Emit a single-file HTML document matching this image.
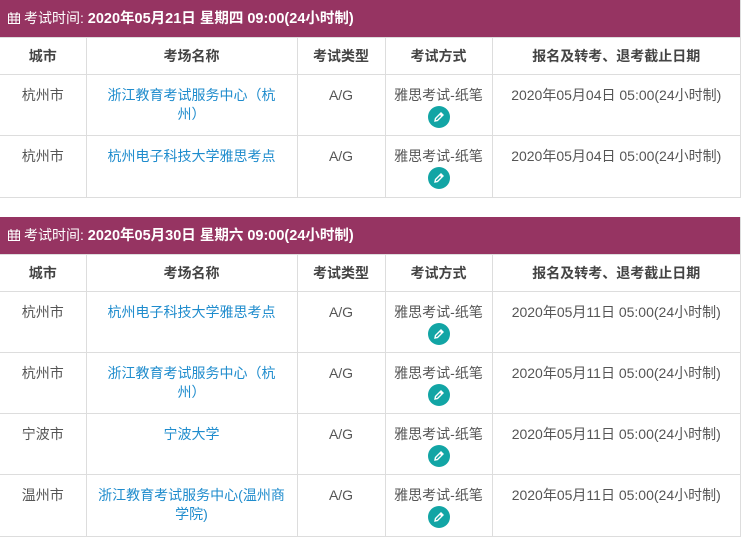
<!DOCTYPE html>
<html><head><meta charset="utf-8"><style>
*{margin:0;padding:0;box-sizing:border-box}
body{width:741px;height:537px;background:#fff;font-family:"Liberation Sans","Noto Sans CJK SC",sans-serif;font-size:14px;color:#555;overflow:hidden;position:relative}
.panel{position:absolute;left:0;width:741px;border-right:1px solid #ddd;border-bottom:1px solid #ddd}
.hd{height:37px;background:#963462;color:#fff;font-size:14px;line-height:37px;padding-left:8px;white-space:nowrap}
.hd b{font-size:14.5px}
table{border-collapse:collapse;width:740px;table-layout:fixed}
td,th{border-left:1px solid #ddd;border-top:1px solid #ddd;text-align:center;vertical-align:top}
td:first-child,th:first-child{border-left:none}
th{height:37px;line-height:36px;font-weight:bold;color:#444;font-size:14px}
td{height:61px;padding-top:11px;line-height:19px;white-space:nowrap}
a{color:#1f8ccd;text-decoration:none}
.ic{display:inline-block;width:22px;height:22px;border-radius:50%;background:#12a5a5;margin-top:1px;position:relative}
.ic svg{position:absolute;left:5px;top:5px}
.cal{display:inline-block;vertical-align:-1px;margin-right:4px}
</style></head><body>
<div class="panel" style="top:0">
<div class="hd"><svg class="cal" width="12" height="12" viewBox="0 0 12 12"><rect x="0.5" y="2" width="11" height="9.5" fill="none" stroke="#fff"/><path d="M0.5 5H11.5M0.5 8H11.5M4 2V11.5M8 2V11.5M3 0V3M9 0V3" stroke="#fff"/></svg>考试时间: <b>2020年05月21日 星期四 09:00(24小时制)</b></div>
<table><colgroup><col style="width:86px"><col style="width:211px"><col style="width:88px"><col style="width:107px"><col></colgroup>
<tr><th>城市</th><th>考场名称</th><th>考试类型</th><th>考试方式</th><th>报名及转考、退考截止日期</th></tr>
<tr><td>杭州市</td><td><a>浙江教育考试服务中心（杭<br>州）</a></td><td>A/G</td><td>雅思考试-纸笔<br><span class="ic"><svg width="12" height="12" viewBox="0 0 12 12"><path d="M2 10L2.5 7.5L8 2L10 4L4.5 9.5Z M7 3L9 5" fill="none" stroke="#fff" stroke-width="1.4"/></svg></span></td><td>2020年05月04日 05:00(24小时制)</td></tr>
<tr><td>杭州市</td><td><a>杭州电子科技大学雅思考点</a></td><td>A/G</td><td>雅思考试-纸笔<br><span class="ic"><svg width="12" height="12" viewBox="0 0 12 12"><path d="M2 10L2.5 7.5L8 2L10 4L4.5 9.5Z M7 3L9 5" fill="none" stroke="#fff" stroke-width="1.4"/></svg></span></td><td>2020年05月04日 05:00(24小时制)</td></tr>
</table></div>
<div class="panel" style="top:217px">
<div class="hd"><svg class="cal" width="12" height="12" viewBox="0 0 12 12"><rect x="0.5" y="2" width="11" height="9.5" fill="none" stroke="#fff"/><path d="M0.5 5H11.5M0.5 8H11.5M4 2V11.5M8 2V11.5M3 0V3M9 0V3" stroke="#fff"/></svg>考试时间: <b>2020年05月30日 星期六 09:00(24小时制)</b></div>
<table><colgroup><col style="width:86px"><col style="width:211px"><col style="width:88px"><col style="width:107px"><col></colgroup>
<tr><th>城市</th><th>考场名称</th><th>考试类型</th><th>考试方式</th><th>报名及转考、退考截止日期</th></tr>
<tr><td>杭州市</td><td><a>杭州电子科技大学雅思考点</a></td><td>A/G</td><td>雅思考试-纸笔<br><span class="ic"><svg width="12" height="12" viewBox="0 0 12 12"><path d="M2 10L2.5 7.5L8 2L10 4L4.5 9.5Z M7 3L9 5" fill="none" stroke="#fff" stroke-width="1.4"/></svg></span></td><td>2020年05月11日 05:00(24小时制)</td></tr>
<tr><td>杭州市</td><td><a>浙江教育考试服务中心（杭<br>州）</a></td><td>A/G</td><td>雅思考试-纸笔<br><span class="ic"><svg width="12" height="12" viewBox="0 0 12 12"><path d="M2 10L2.5 7.5L8 2L10 4L4.5 9.5Z M7 3L9 5" fill="none" stroke="#fff" stroke-width="1.4"/></svg></span></td><td>2020年05月11日 05:00(24小时制)</td></tr>
<tr><td>宁波市</td><td><a>宁波大学</a></td><td>A/G</td><td>雅思考试-纸笔<br><span class="ic"><svg width="12" height="12" viewBox="0 0 12 12"><path d="M2 10L2.5 7.5L8 2L10 4L4.5 9.5Z M7 3L9 5" fill="none" stroke="#fff" stroke-width="1.4"/></svg></span></td><td>2020年05月11日 05:00(24小时制)</td></tr>
<tr><td>温州市</td><td><a>浙江教育考试服务中心(温州商<br>学院)</a></td><td>A/G</td><td>雅思考试-纸笔<br><span class="ic"><svg width="12" height="12" viewBox="0 0 12 12"><path d="M2 10L2.5 7.5L8 2L10 4L4.5 9.5Z M7 3L9 5" fill="none" stroke="#fff" stroke-width="1.4"/></svg></span></td><td>2020年05月11日 05:00(24小时制)</td></tr>
</table></div>
</body></html>
